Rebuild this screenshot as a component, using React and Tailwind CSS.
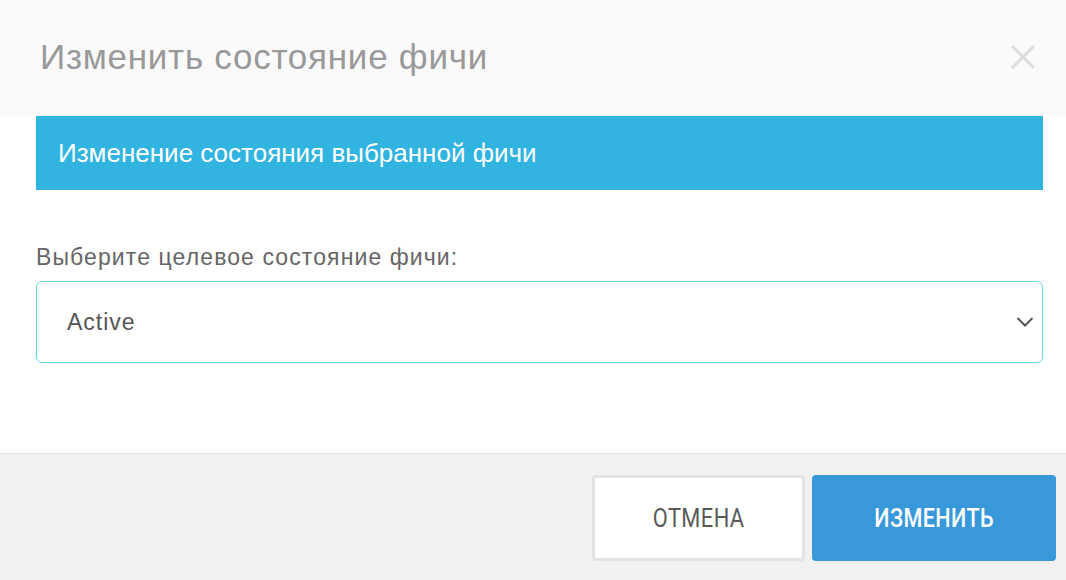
import React from "react";

export default function App() {
  return (
    <div className="w-[1066px] h-[580px] bg-white flex flex-col overflow-hidden" style={{ fontFamily: '"Liberation Sans", Arial, sans-serif' }}>
      <div className="h-[116px] bg-[#fafafa] flex items-center justify-between pl-[40px] pr-[30px] shrink-0">
        <h1 className="text-[35px] text-[#999] font-normal leading-none tracking-[0.75px] -mt-[3px]">Изменить состояние фичи</h1>
        <svg width="26" height="26" viewBox="0 0 26 26" className="-mt-[2px]">
          <path d="M2 2 L24 24 M24 2 L2 24" stroke="#dcdcdc" strokeWidth="3" />
        </svg>
      </div>
      <div className="px-[36px] pr-[23px] flex flex-col flex-1">
        <div className="h-[74px] bg-[#31b4e0] flex items-center pl-[22px]">
          <span className="text-white text-[26px] leading-none">Изменение состояния выбранной фичи</span>
        </div>
        <div className="mt-[56px] text-[23px] text-[#666] leading-none tracking-[1.1px]">Выберите целевое состояние фичи:</div>
        <div className="mt-[12px] h-[82px] border border-[#6dd6e3] rounded-[6px] flex items-center justify-between pl-[30px] pr-[8px]">
          <span className="text-[23px] text-[#555] tracking-[1px]">Active</span>
          <svg width="18" height="12" viewBox="0 0 18 12">
            <path d="M1.5 2 L9 9.5 L16.5 2" stroke="#555" strokeWidth="2" fill="none" />
          </svg>
        </div>
      </div>
      <div className="h-[127px] shrink-0 border-t border-[#dddddd] bg-[#f1f1f1] flex items-start justify-end pt-[21px] pr-[10px] gap-[7px]" style={{ fontFamily: 'Roboto, sans-serif' }}>
        <button className="w-[213px] h-[86px] bg-white border-[3px] border-[#e3e3e3] rounded-[4px] text-[#5a5a5a] flex items-center justify-center">
          <span className="inline-block text-[26px] scale-x-[0.84] tracking-[0.5px]">ОТМЕНА</span>
        </button>
        <button className="w-[244px] h-[86px] bg-[#3898d9] rounded-[4px] text-white flex items-center justify-center">
          <span className="inline-block text-[26px] font-medium scale-x-[0.83] tracking-[0.5px]">ИЗМЕНИТЬ</span>
        </button>
      </div>
    </div>
  );
}
